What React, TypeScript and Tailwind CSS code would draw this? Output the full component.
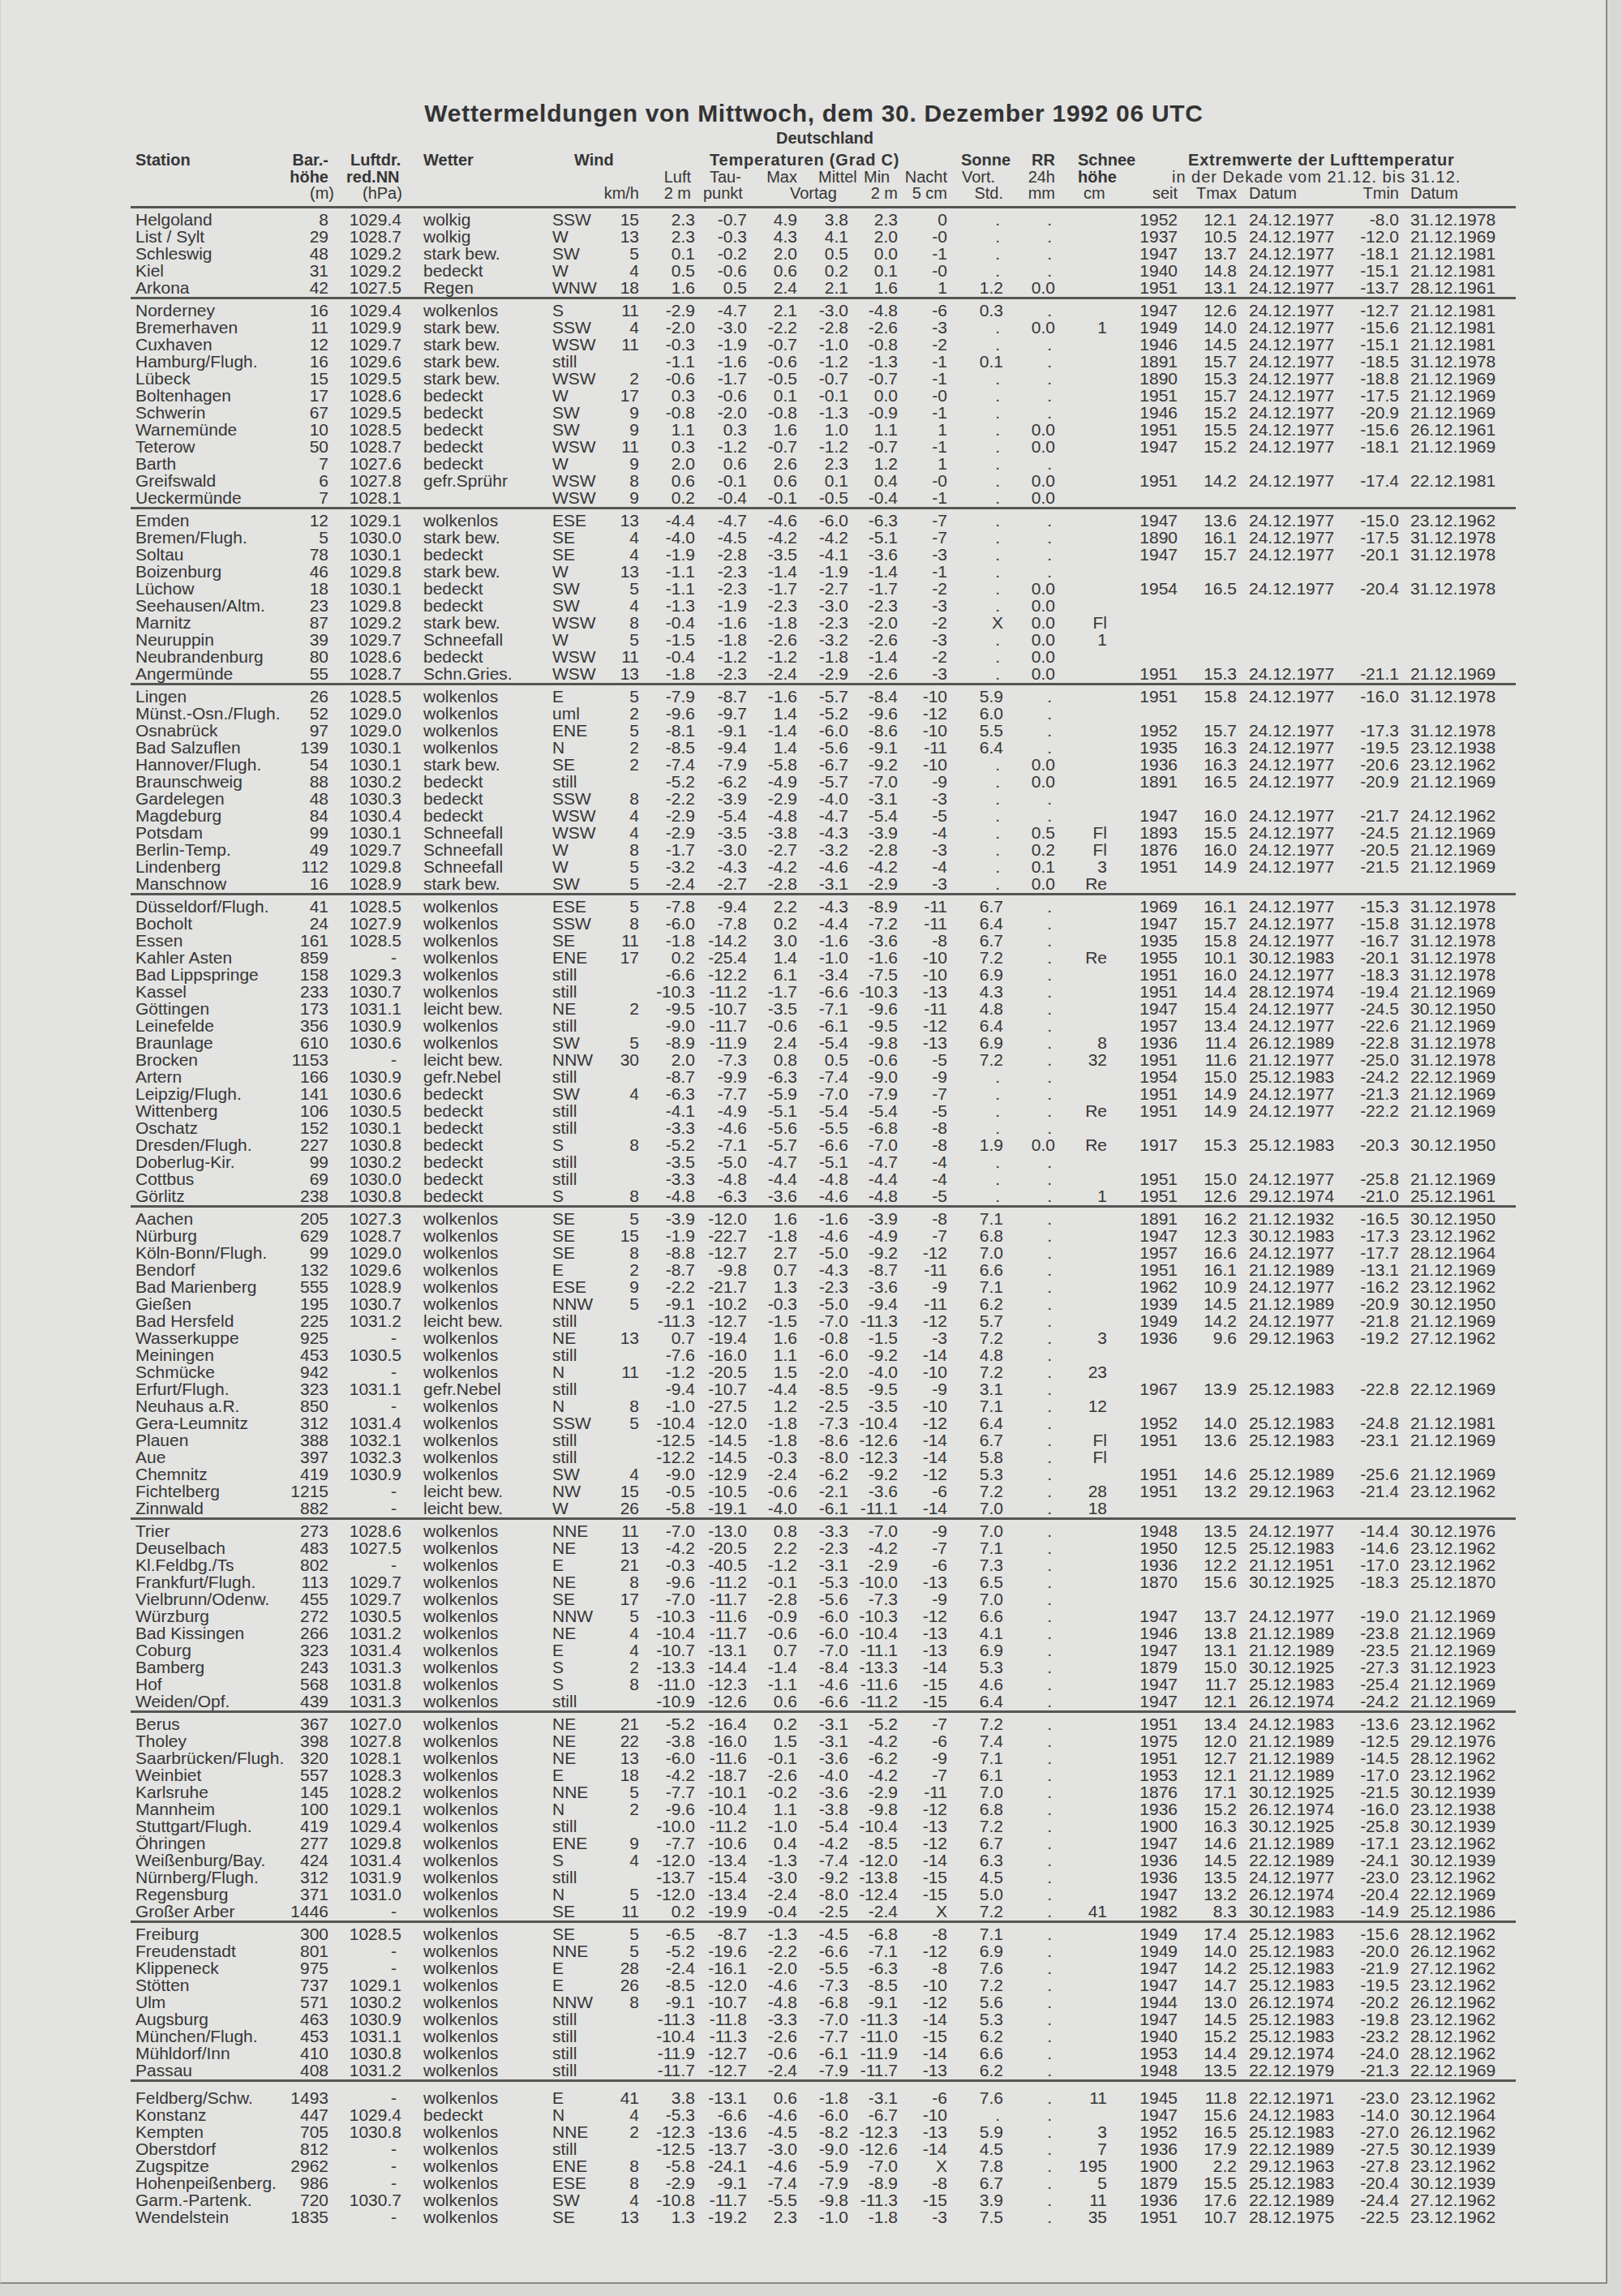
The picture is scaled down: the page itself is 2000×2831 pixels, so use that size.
const GRID =
  "grid grid-cols-[180px_64px_90px_186px_60px_47px_69px_64px_62px_63px_61px_61px_69px_64px_64px_87px_73px_120px_80px_144px]";

// column alignment, one entry per column
const colCls = [
  "pl-[6px] text-left",
  "text-right",
  "text-right",
  "pl-[27px] text-left",
  "text-left",
  "text-right",
  "text-right",
  "text-right",
  "text-right",
  "text-right",
  "text-right",
  "text-right",
  "text-right",
  "text-right",
  "text-right",
  "text-right",
  "text-right",
  "pl-[15px] text-left",
  "text-right pr-[-4px]",
  "pl-[14px] text-left",
];

const groups: string[][] = [
  [
    "Helgoland|8|1029.4|wolkig|SSW|15|2.3|-0.7|4.9|3.8|2.3|0|.|.||1952|12.1|24.12.1977|-8.0|31.12.1978",
    "List / Sylt|29|1028.7|wolkig|W|13|2.3|-0.3|4.3|4.1|2.0|-0|.|.||1937|10.5|24.12.1977|-12.0|21.12.1969",
    "Schleswig|48|1029.2|stark bew.|SW|5|0.1|-0.2|2.0|0.5|0.0|-1|.|.||1947|13.7|24.12.1977|-18.1|21.12.1981",
    "Kiel|31|1029.2|bedeckt|W|4|0.5|-0.6|0.6|0.2|0.1|-0|.|.||1940|14.8|24.12.1977|-15.1|21.12.1981",
    "Arkona|42|1027.5|Regen|WNW|18|1.6|0.5|2.4|2.1|1.6|1|1.2|0.0||1951|13.1|24.12.1977|-13.7|28.12.1961",
  ],
  [
    "Norderney|16|1029.4|wolkenlos|S|11|-2.9|-4.7|2.1|-3.0|-4.8|-6|0.3|.||1947|12.6|24.12.1977|-12.7|21.12.1981",
    "Bremerhaven|11|1029.9|stark bew.|SSW|4|-2.0|-3.0|-2.2|-2.8|-2.6|-3|.|0.0|1|1949|14.0|24.12.1977|-15.6|21.12.1981",
    "Cuxhaven|12|1029.7|stark bew.|WSW|11|-0.3|-1.9|-0.7|-1.0|-0.8|-2|.|.||1946|14.5|24.12.1977|-15.1|21.12.1981",
    "Hamburg/Flugh.|16|1029.6|stark bew.|still||-1.1|-1.6|-0.6|-1.2|-1.3|-1|0.1|.||1891|15.7|24.12.1977|-18.5|31.12.1978",
    "Lübeck|15|1029.5|stark bew.|WSW|2|-0.6|-1.7|-0.5|-0.7|-0.7|-1|.|.||1890|15.3|24.12.1977|-18.8|21.12.1969",
    "Boltenhagen|17|1028.6|bedeckt|W|17|0.3|-0.6|0.1|-0.1|0.0|-0|.|.||1951|15.7|24.12.1977|-17.5|21.12.1969",
    "Schwerin|67|1029.5|bedeckt|SW|9|-0.8|-2.0|-0.8|-1.3|-0.9|-1|.|.||1946|15.2|24.12.1977|-20.9|21.12.1969",
    "Warnemünde|10|1028.5|bedeckt|SW|9|1.1|0.3|1.6|1.0|1.1|1|.|0.0||1951|15.5|24.12.1977|-15.6|26.12.1961",
    "Teterow|50|1028.7|bedeckt|WSW|11|0.3|-1.2|-0.7|-1.2|-0.7|-1|.|0.0||1947|15.2|24.12.1977|-18.1|21.12.1969",
    "Barth|7|1027.6|bedeckt|W|9|2.0|0.6|2.6|2.3|1.2|1|.|.",
    "Greifswald|6|1027.8|gefr.Sprühr|WSW|8|0.6|-0.1|0.6|0.1|0.4|-0|.|0.0||1951|14.2|24.12.1977|-17.4|22.12.1981",
    "Ueckermünde|7|1028.1||WSW|9|0.2|-0.4|-0.1|-0.5|-0.4|-1|.|0.0",
  ],
  [
    "Emden|12|1029.1|wolkenlos|ESE|13|-4.4|-4.7|-4.6|-6.0|-6.3|-7|.|.||1947|13.6|24.12.1977|-15.0|23.12.1962",
    "Bremen/Flugh.|5|1030.0|stark bew.|SE|4|-4.0|-4.5|-4.2|-4.2|-5.1|-7|.|.||1890|16.1|24.12.1977|-17.5|31.12.1978",
    "Soltau|78|1030.1|bedeckt|SE|4|-1.9|-2.8|-3.5|-4.1|-3.6|-3|.|.||1947|15.7|24.12.1977|-20.1|31.12.1978",
    "Boizenburg|46|1029.8|stark bew.|W|13|-1.1|-2.3|-1.4|-1.9|-1.4|-1|.|.",
    "Lüchow|18|1030.1|bedeckt|SW|5|-1.1|-2.3|-1.7|-2.7|-1.7|-2|.|0.0||1954|16.5|24.12.1977|-20.4|31.12.1978",
    "Seehausen/Altm.|23|1029.8|bedeckt|SW|4|-1.3|-1.9|-2.3|-3.0|-2.3|-3|.|0.0",
    "Marnitz|87|1029.2|stark bew.|WSW|8|-0.4|-1.6|-1.8|-2.3|-2.0|-2|X|0.0|Fl",
    "Neuruppin|39|1029.7|Schneefall|W|5|-1.5|-1.8|-2.6|-3.2|-2.6|-3|.|0.0|1",
    "Neubrandenburg|80|1028.6|bedeckt|WSW|11|-0.4|-1.2|-1.2|-1.8|-1.4|-2|.|0.0",
    "Angermünde|55|1028.7|Schn.Gries.|WSW|13|-1.8|-2.3|-2.4|-2.9|-2.6|-3|.|0.0||1951|15.3|24.12.1977|-21.1|21.12.1969",
  ],
  [
    "Lingen|26|1028.5|wolkenlos|E|5|-7.9|-8.7|-1.6|-5.7|-8.4|-10|5.9|.||1951|15.8|24.12.1977|-16.0|31.12.1978",
    "Münst.-Osn./Flugh.|52|1029.0|wolkenlos|uml|2|-9.6|-9.7|1.4|-5.2|-9.6|-12|6.0|.",
    "Osnabrück|97|1029.0|wolkenlos|ENE|5|-8.1|-9.1|-1.4|-6.0|-8.6|-10|5.5|.||1952|15.7|24.12.1977|-17.3|31.12.1978",
    "Bad Salzuflen|139|1030.1|wolkenlos|N|2|-8.5|-9.4|1.4|-5.6|-9.1|-11|6.4|.||1935|16.3|24.12.1977|-19.5|23.12.1938",
    "Hannover/Flugh.|54|1030.1|stark bew.|SE|2|-7.4|-7.9|-5.8|-6.7|-9.2|-10|.|0.0||1936|16.3|24.12.1977|-20.6|23.12.1962",
    "Braunschweig|88|1030.2|bedeckt|still||-5.2|-6.2|-4.9|-5.7|-7.0|-9|.|0.0||1891|16.5|24.12.1977|-20.9|21.12.1969",
    "Gardelegen|48|1030.3|bedeckt|SSW|8|-2.2|-3.9|-2.9|-4.0|-3.1|-3|.|.",
    "Magdeburg|84|1030.4|bedeckt|WSW|4|-2.9|-5.4|-4.8|-4.7|-5.4|-5|.|.||1947|16.0|24.12.1977|-21.7|24.12.1962",
    "Potsdam|99|1030.1|Schneefall|WSW|4|-2.9|-3.5|-3.8|-4.3|-3.9|-4|.|0.5|Fl|1893|15.5|24.12.1977|-24.5|21.12.1969",
    "Berlin-Temp.|49|1029.7|Schneefall|W|8|-1.7|-3.0|-2.7|-3.2|-2.8|-3|.|0.2|Fl|1876|16.0|24.12.1977|-20.5|21.12.1969",
    "Lindenberg|112|1029.8|Schneefall|W|5|-3.2|-4.3|-4.2|-4.6|-4.2|-4|.|0.1|3|1951|14.9|24.12.1977|-21.5|21.12.1969",
    "Manschnow|16|1028.9|stark bew.|SW|5|-2.4|-2.7|-2.8|-3.1|-2.9|-3|.|0.0|Re",
  ],
  [
    "Düsseldorf/Flugh.|41|1028.5|wolkenlos|ESE|5|-7.8|-9.4|2.2|-4.3|-8.9|-11|6.7|.||1969|16.1|24.12.1977|-15.3|31.12.1978",
    "Bocholt|24|1027.9|wolkenlos|SSW|8|-6.0|-7.8|0.2|-4.4|-7.2|-11|6.4|.||1947|15.7|24.12.1977|-15.8|31.12.1978",
    "Essen|161|1028.5|wolkenlos|SE|11|-1.8|-14.2|3.0|-1.6|-3.6|-8|6.7|.||1935|15.8|24.12.1977|-16.7|31.12.1978",
    "Kahler Asten|859|-|wolkenlos|ENE|17|0.2|-25.4|1.4|-1.0|-1.6|-10|7.2|.|Re|1955|10.1|30.12.1983|-20.1|31.12.1978",
    "Bad Lippspringe|158|1029.3|wolkenlos|still||-6.6|-12.2|6.1|-3.4|-7.5|-10|6.9|.||1951|16.0|24.12.1977|-18.3|31.12.1978",
    "Kassel|233|1030.7|wolkenlos|still||-10.3|-11.2|-1.7|-6.6|-10.3|-13|4.3|.||1951|14.4|28.12.1974|-19.4|21.12.1969",
    "Göttingen|173|1031.1|leicht bew.|NE|2|-9.5|-10.7|-3.5|-7.1|-9.6|-11|4.8|.||1947|15.4|24.12.1977|-24.5|30.12.1950",
    "Leinefelde|356|1030.9|wolkenlos|still||-9.0|-11.7|-0.6|-6.1|-9.5|-12|6.4|.||1957|13.4|24.12.1977|-22.6|21.12.1969",
    "Braunlage|610|1030.6|wolkenlos|SW|5|-8.9|-11.9|2.4|-5.4|-9.8|-13|6.9|.|8|1936|11.4|26.12.1989|-22.8|31.12.1978",
    "Brocken|1153|-|leicht bew.|NNW|30|2.0|-7.3|0.8|0.5|-0.6|-5|7.2|.|32|1951|11.6|21.12.1977|-25.0|31.12.1978",
    "Artern|166|1030.9|gefr.Nebel|still||-8.7|-9.9|-6.3|-7.4|-9.0|-9|.|.||1954|15.0|25.12.1983|-24.2|22.12.1969",
    "Leipzig/Flugh.|141|1030.6|bedeckt|SW|4|-6.3|-7.7|-5.9|-7.0|-7.9|-7|.|.||1951|14.9|24.12.1977|-21.3|21.12.1969",
    "Wittenberg|106|1030.5|bedeckt|still||-4.1|-4.9|-5.1|-5.4|-5.4|-5|.|.|Re|1951|14.9|24.12.1977|-22.2|21.12.1969",
    "Oschatz|152|1030.1|bedeckt|still||-3.3|-4.6|-5.6|-5.5|-6.8|-8|.|.",
    "Dresden/Flugh.|227|1030.8|bedeckt|S|8|-5.2|-7.1|-5.7|-6.6|-7.0|-8|1.9|0.0|Re|1917|15.3|25.12.1983|-20.3|30.12.1950",
    "Doberlug-Kir.|99|1030.2|bedeckt|still||-3.5|-5.0|-4.7|-5.1|-4.7|-4|.|.",
    "Cottbus|69|1030.0|bedeckt|still||-3.3|-4.8|-4.4|-4.8|-4.4|-4|.|.||1951|15.0|24.12.1977|-25.8|21.12.1969",
    "Görlitz|238|1030.8|bedeckt|S|8|-4.8|-6.3|-3.6|-4.6|-4.8|-5|.|.|1|1951|12.6|29.12.1974|-21.0|25.12.1961",
  ],
  [
    "Aachen|205|1027.3|wolkenlos|SE|5|-3.9|-12.0|1.6|-1.6|-3.9|-8|7.1|.||1891|16.2|21.12.1932|-16.5|30.12.1950",
    "Nürburg|629|1028.7|wolkenlos|SE|15|-1.9|-22.7|-1.8|-4.6|-4.9|-7|6.8|.||1947|12.3|30.12.1983|-17.3|23.12.1962",
    "Köln-Bonn/Flugh.|99|1029.0|wolkenlos|SE|8|-8.8|-12.7|2.7|-5.0|-9.2|-12|7.0|.||1957|16.6|24.12.1977|-17.7|28.12.1964",
    "Bendorf|132|1029.6|wolkenlos|E|2|-8.7|-9.8|0.7|-4.3|-8.7|-11|6.6|.||1951|16.1|21.12.1989|-13.1|21.12.1969",
    "Bad Marienberg|555|1028.9|wolkenlos|ESE|9|-2.2|-21.7|1.3|-2.3|-3.6|-9|7.1|.||1962|10.9|24.12.1977|-16.2|23.12.1962",
    "Gießen|195|1030.7|wolkenlos|NNW|5|-9.1|-10.2|-0.3|-5.0|-9.4|-11|6.2|.||1939|14.5|21.12.1989|-20.9|30.12.1950",
    "Bad Hersfeld|225|1031.2|leicht bew.|still||-11.3|-12.7|-1.5|-7.0|-11.3|-12|5.7|.||1949|14.2|24.12.1977|-21.8|21.12.1969",
    "Wasserkuppe|925|-|wolkenlos|NE|13|0.7|-19.4|1.6|-0.8|-1.5|-3|7.2|.|3|1936|9.6|29.12.1963|-19.2|27.12.1962",
    "Meiningen|453|1030.5|wolkenlos|still||-7.6|-16.0|1.1|-6.0|-9.2|-14|4.8|.",
    "Schmücke|942|-|wolkenlos|N|11|-1.2|-20.5|1.5|-2.0|-4.0|-10|7.2|.|23",
    "Erfurt/Flugh.|323|1031.1|gefr.Nebel|still||-9.4|-10.7|-4.4|-8.5|-9.5|-9|3.1|.||1967|13.9|25.12.1983|-22.8|22.12.1969",
    "Neuhaus a.R.|850|-|wolkenlos|N|8|-1.0|-27.5|1.2|-2.5|-3.5|-10|7.1|.|12",
    "Gera-Leumnitz|312|1031.4|wolkenlos|SSW|5|-10.4|-12.0|-1.8|-7.3|-10.4|-12|6.4|.||1952|14.0|25.12.1983|-24.8|21.12.1981",
    "Plauen|388|1032.1|wolkenlos|still||-12.5|-14.5|-1.8|-8.6|-12.6|-14|6.7|.|Fl|1951|13.6|25.12.1983|-23.1|21.12.1969",
    "Aue|397|1032.3|wolkenlos|still||-12.2|-14.5|-0.3|-8.0|-12.3|-14|5.8|.|Fl",
    "Chemnitz|419|1030.9|wolkenlos|SW|4|-9.0|-12.9|-2.4|-6.2|-9.2|-12|5.3|.||1951|14.6|25.12.1989|-25.6|21.12.1969",
    "Fichtelberg|1215|-|leicht bew.|NW|15|-0.5|-10.5|-0.6|-2.1|-3.6|-6|7.2|.|28|1951|13.2|29.12.1963|-21.4|23.12.1962",
    "Zinnwald|882|-|leicht bew.|W|26|-5.8|-19.1|-4.0|-6.1|-11.1|-14|7.0|.|18",
  ],
  [
    "Trier|273|1028.6|wolkenlos|NNE|11|-7.0|-13.0|0.8|-3.3|-7.0|-9|7.0|.||1948|13.5|24.12.1977|-14.4|30.12.1976",
    "Deuselbach|483|1027.5|wolkenlos|NE|13|-4.2|-20.5|2.2|-2.3|-4.2|-7|7.1|.||1950|12.5|25.12.1983|-14.6|23.12.1962",
    "Kl.Feldbg./Ts|802|-|wolkenlos|E|21|-0.3|-40.5|-1.2|-3.1|-2.9|-6|7.3|.||1936|12.2|21.12.1951|-17.0|23.12.1962",
    "Frankfurt/Flugh.|113|1029.7|wolkenlos|NE|8|-9.6|-11.2|-0.1|-5.3|-10.0|-13|6.5|.||1870|15.6|30.12.1925|-18.3|25.12.1870",
    "Vielbrunn/Odenw.|455|1029.7|wolkenlos|SE|17|-7.0|-11.7|-2.8|-5.6|-7.3|-9|7.0|.",
    "Würzburg|272|1030.5|wolkenlos|NNW|5|-10.3|-11.6|-0.9|-6.0|-10.3|-12|6.6|.||1947|13.7|24.12.1977|-19.0|21.12.1969",
    "Bad Kissingen|266|1031.2|wolkenlos|NE|4|-10.4|-11.7|-0.6|-6.0|-10.4|-13|4.1|.||1946|13.8|21.12.1989|-23.8|21.12.1969",
    "Coburg|323|1031.4|wolkenlos|E|4|-10.7|-13.1|0.7|-7.0|-11.1|-13|6.9|.||1947|13.1|21.12.1989|-23.5|21.12.1969",
    "Bamberg|243|1031.3|wolkenlos|S|2|-13.3|-14.4|-1.4|-8.4|-13.3|-14|5.3|.||1879|15.0|30.12.1925|-27.3|31.12.1923",
    "Hof|568|1031.8|wolkenlos|S|8|-11.0|-12.3|-1.1|-4.6|-11.6|-15|4.6|.||1947|11.7|25.12.1983|-25.4|21.12.1969",
    "Weiden/Opf.|439|1031.3|wolkenlos|still||-10.9|-12.6|0.6|-6.6|-11.2|-15|6.4|.||1947|12.1|26.12.1974|-24.2|21.12.1969",
  ],
  [
    "Berus|367|1027.0|wolkenlos|NE|21|-5.2|-16.4|0.2|-3.1|-5.2|-7|7.2|.||1951|13.4|24.12.1983|-13.6|23.12.1962",
    "Tholey|398|1027.8|wolkenlos|NE|22|-3.8|-16.0|1.5|-3.1|-4.2|-6|7.4|.||1975|12.0|21.12.1989|-12.5|29.12.1976",
    "Saarbrücken/Flugh.|320|1028.1|wolkenlos|NE|13|-6.0|-11.6|-0.1|-3.6|-6.2|-9|7.1|.||1951|12.7|21.12.1989|-14.5|28.12.1962",
    "Weinbiet|557|1028.3|wolkenlos|E|18|-4.2|-18.7|-2.6|-4.0|-4.2|-7|6.1|.||1953|12.1|21.12.1989|-17.0|23.12.1962",
    "Karlsruhe|145|1028.2|wolkenlos|NNE|5|-7.7|-10.1|-0.2|-3.6|-2.9|-11|7.0|.||1876|17.1|30.12.1925|-21.5|30.12.1939",
    "Mannheim|100|1029.1|wolkenlos|N|2|-9.6|-10.4|1.1|-3.8|-9.8|-12|6.8|.||1936|15.2|26.12.1974|-16.0|23.12.1938",
    "Stuttgart/Flugh.|419|1029.4|wolkenlos|still||-10.0|-11.2|-1.0|-5.4|-10.4|-13|7.2|.||1900|16.3|30.12.1925|-25.8|30.12.1939",
    "Öhringen|277|1029.8|wolkenlos|ENE|9|-7.7|-10.6|0.4|-4.2|-8.5|-12|6.7|.||1947|14.6|21.12.1989|-17.1|23.12.1962",
    "Weißenburg/Bay.|424|1031.4|wolkenlos|S|4|-12.0|-13.4|-1.3|-7.4|-12.0|-14|6.3|.||1936|14.5|22.12.1989|-24.1|30.12.1939",
    "Nürnberg/Flugh.|312|1031.9|wolkenlos|still||-13.7|-15.4|-3.0|-9.2|-13.8|-15|4.5|.||1936|13.5|24.12.1977|-23.0|23.12.1962",
    "Regensburg|371|1031.0|wolkenlos|N|5|-12.0|-13.4|-2.4|-8.0|-12.4|-15|5.0|.||1947|13.2|26.12.1974|-20.4|22.12.1969",
    "Großer Arber|1446|-|wolkenlos|SE|11|0.2|-19.9|-0.4|-2.5|-2.4|X|7.2|.|41|1982|8.3|30.12.1983|-14.9|25.12.1986",
  ],
  [
    "Freiburg|300|1028.5|wolkenlos|SE|5|-6.5|-8.7|-1.3|-4.5|-6.8|-8|7.1|.||1949|17.4|25.12.1983|-15.6|28.12.1962",
    "Freudenstadt|801|-|wolkenlos|NNE|5|-5.2|-19.6|-2.2|-6.6|-7.1|-12|6.9|.||1949|14.0|25.12.1983|-20.0|26.12.1962",
    "Klippeneck|975|-|wolkenlos|E|28|-2.4|-16.1|-2.0|-5.5|-6.3|-8|7.6|.||1947|14.2|25.12.1983|-21.9|27.12.1962",
    "Stötten|737|1029.1|wolkenlos|E|26|-8.5|-12.0|-4.6|-7.3|-8.5|-10|7.2|.||1947|14.7|25.12.1983|-19.5|23.12.1962",
    "Ulm|571|1030.2|wolkenlos|NNW|8|-9.1|-10.7|-4.8|-6.8|-9.1|-12|5.6|.||1944|13.0|26.12.1974|-20.2|26.12.1962",
    "Augsburg|463|1030.9|wolkenlos|still||-11.3|-11.8|-3.3|-7.0|-11.3|-14|5.3|.||1947|14.5|25.12.1983|-19.8|23.12.1962",
    "München/Flugh.|453|1031.1|wolkenlos|still||-10.4|-11.3|-2.6|-7.7|-11.0|-15|6.2|.||1940|15.2|25.12.1983|-23.2|28.12.1962",
    "Mühldorf/Inn|410|1030.8|wolkenlos|still||-11.9|-12.7|-0.6|-6.1|-11.9|-14|6.6|.||1953|14.4|29.12.1974|-24.0|28.12.1962",
    "Passau|408|1031.2|wolkenlos|still||-11.7|-12.7|-2.4|-7.9|-11.7|-13|6.2|.||1948|13.5|22.12.1979|-21.3|22.12.1969",
  ],
  [
    "Feldberg/Schw.|1493|-|wolkenlos|E|41|3.8|-13.1|0.6|-1.8|-3.1|-6|7.6|.|11|1945|11.8|22.12.1971|-23.0|23.12.1962",
    "Konstanz|447|1029.4|bedeckt|N|4|-5.3|-6.6|-4.6|-6.0|-6.7|-10|.|.||1947|15.6|24.12.1983|-14.0|30.12.1964",
    "Kempten|705|1030.8|wolkenlos|NNE|2|-12.3|-13.6|-4.5|-8.2|-12.3|-13|5.9|.|3|1952|16.5|25.12.1983|-27.0|26.12.1962",
    "Oberstdorf|812|-|wolkenlos|still||-12.5|-13.7|-3.0|-9.0|-12.6|-14|4.5|.|7|1936|17.9|22.12.1989|-27.5|30.12.1939",
    "Zugspitze|2962|-|wolkenlos|ENE|8|-5.8|-24.1|-4.6|-5.9|-7.0|X|7.8|.|195|1900|2.2|29.12.1963|-27.8|23.12.1962",
    "Hohenpeißenberg.|986|-|wolkenlos|ESE|8|-2.9|-9.1|-7.4|-7.9|-8.9|-8|6.7|.|5|1879|15.5|25.12.1983|-20.4|30.12.1939",
    "Garm.-Partenk.|720|1030.7|wolkenlos|SW|4|-10.8|-11.7|-5.5|-9.8|-11.3|-15|3.9|.|11|1936|17.6|22.12.1989|-24.4|27.12.1962",
    "Wendelstein|1835|-|wolkenlos|SE|13|1.3|-19.2|2.3|-1.0|-1.8|-3|7.5|.|35|1951|10.7|28.12.1975|-22.5|23.12.1962",
  ],
];

function DataRow({ line }: { line: string }) {
  const f = line.split("|");
  while (f.length < 20) f.push("");
  return (
    <div className={`${GRID} h-[21px] leading-[21px]`}>
      {f.map((v, i) => (
        <div
          key={i}
          className={`${colCls[i]} whitespace-nowrap ${v === "." ? "pr-[4px]" : ""} ${
            v === "-" && i === 2 ? "pr-[6px]" : ""
          }`}
        >
          {v}
        </div>
      ))}
    </div>
  );
}

function Rule({ last }: { last?: boolean }) {
  return <div className={`mt-[1px] h-[3px] bg-[#555553] ${last ? "mb-[9px]" : "mb-[3px]"}`} />;
}

function Header() {
  return (
    <div className="text-[20px]">
      <div className={`${GRID} mt-[2px] h-[20px] leading-[20px] font-bold`}>
        <div className="col-start-8 col-span-5 pl-[100px] whitespace-nowrap">Deutschland</div>
      </div>
      <div className={`${GRID} mt-[7px] h-[20.5px] leading-[20.5px] font-bold whitespace-nowrap`}>
        <div className="pl-[6px]">Station</div>
        <div className="text-right">Bar.-</div>
        <div className="pl-[27px]">Luftdr.</div>
        <div className="pl-[27px]">Wetter</div>
        <div className="col-span-2 pl-[27px]">Wind</div>
        <div className="col-start-8 col-span-5 pl-[18px] tracking-[0.8px]">Temperaturen (Grad C)</div>
        <div className="pl-[17px]">Sonne</div>
        <div className="text-right">RR</div>
        <div className="pl-[28px]">Schnee</div>
        <div className="col-span-5 pl-[100px] tracking-[0.8px]">Extremwerte der Lufttemperatur</div>
      </div>
      <div className={`${GRID} h-[20.5px] leading-[20.5px] whitespace-nowrap`}>
        <div className="col-start-2 text-right font-bold">höhe</div>
        <div className="pl-[22px] font-bold">red.NN</div>
        <div className="col-start-7 text-right pr-[5px]">Luft</div>
        <div className="pl-[18px]">Tau-</div>
        <div className="text-right">Max</div>
        <div className="pl-[26px]">Mittel</div>
        <div className="pl-[19px]">Min</div>
        <div className="text-right">Nacht</div>
        <div className="pl-[18px]">Vort.</div>
        <div className="text-right">24h</div>
        <div className="pl-[28px] font-bold">höhe</div>
        <div className="col-span-5 pl-[80px] tracking-[1px]">in der Dekade vom 21.12. bis 31.12.</div>
      </div>
      <div className={`${GRID} h-[20.5px] leading-[20.5px] whitespace-nowrap`}>
        <div className="col-start-2 pl-[41px]">(m)</div>
        <div className="pl-[42px]">(hPa)</div>
        <div className="col-start-6 text-right">km/h</div>
        <div className="text-right pr-[5px]">2 m</div>
        <div className="pl-[10px]">punkt</div>
        <div className="col-span-2 pl-[53px]">Vortag</div>
        <div className="text-right">2 m</div>
        <div className="text-right">5 cm</div>
        <div className="text-right">Std.</div>
        <div className="text-right">mm</div>
        <div className="pl-[35px]">cm</div>
        <div className="text-right">seit</div>
        <div className="text-right">Tmax</div>
        <div className="pl-[15px]">Datum</div>
        <div className="text-right">Tmin</div>
        <div className="pl-[14px]">Datum</div>
      </div>
      <div className="mt-[5px] mb-[3px] h-[3px] bg-[#555553]" />
    </div>
  );
}

export default function App() {
  return (
    <div className="w-[2000px] h-[2831px] bg-[#d8d8d6] font-['Liberation_Sans',Arial,sans-serif] text-[#363636]">
      <div className="w-[1982px] h-[2816px] bg-[#e3e3e1] border-l border-l-[#cfcfcd] border-r-2 border-b-2 border-[#8a8a88] pt-[122px]">
        <h1 className="pl-[26px] text-center text-[30px] leading-[36px] font-bold tracking-[0.7px] text-[#333]">
          Wettermeldungen von Mittwoch, dem 30. Dezember 1992 06 UTC
        </h1>
        <div className="ml-[160px] w-[1708px]">
          <Header />
          <div className="text-[21px]">
            {groups.map((g, gi) => (
              <div key={gi}>
                {g.map((line) => (
                  <DataRow key={line} line={line} />
                ))}
                {gi < groups.length - 1 && <Rule last={gi === groups.length - 2} />}
              </div>
            ))}
          </div>
        </div>
      </div>
    </div>
  );
}
